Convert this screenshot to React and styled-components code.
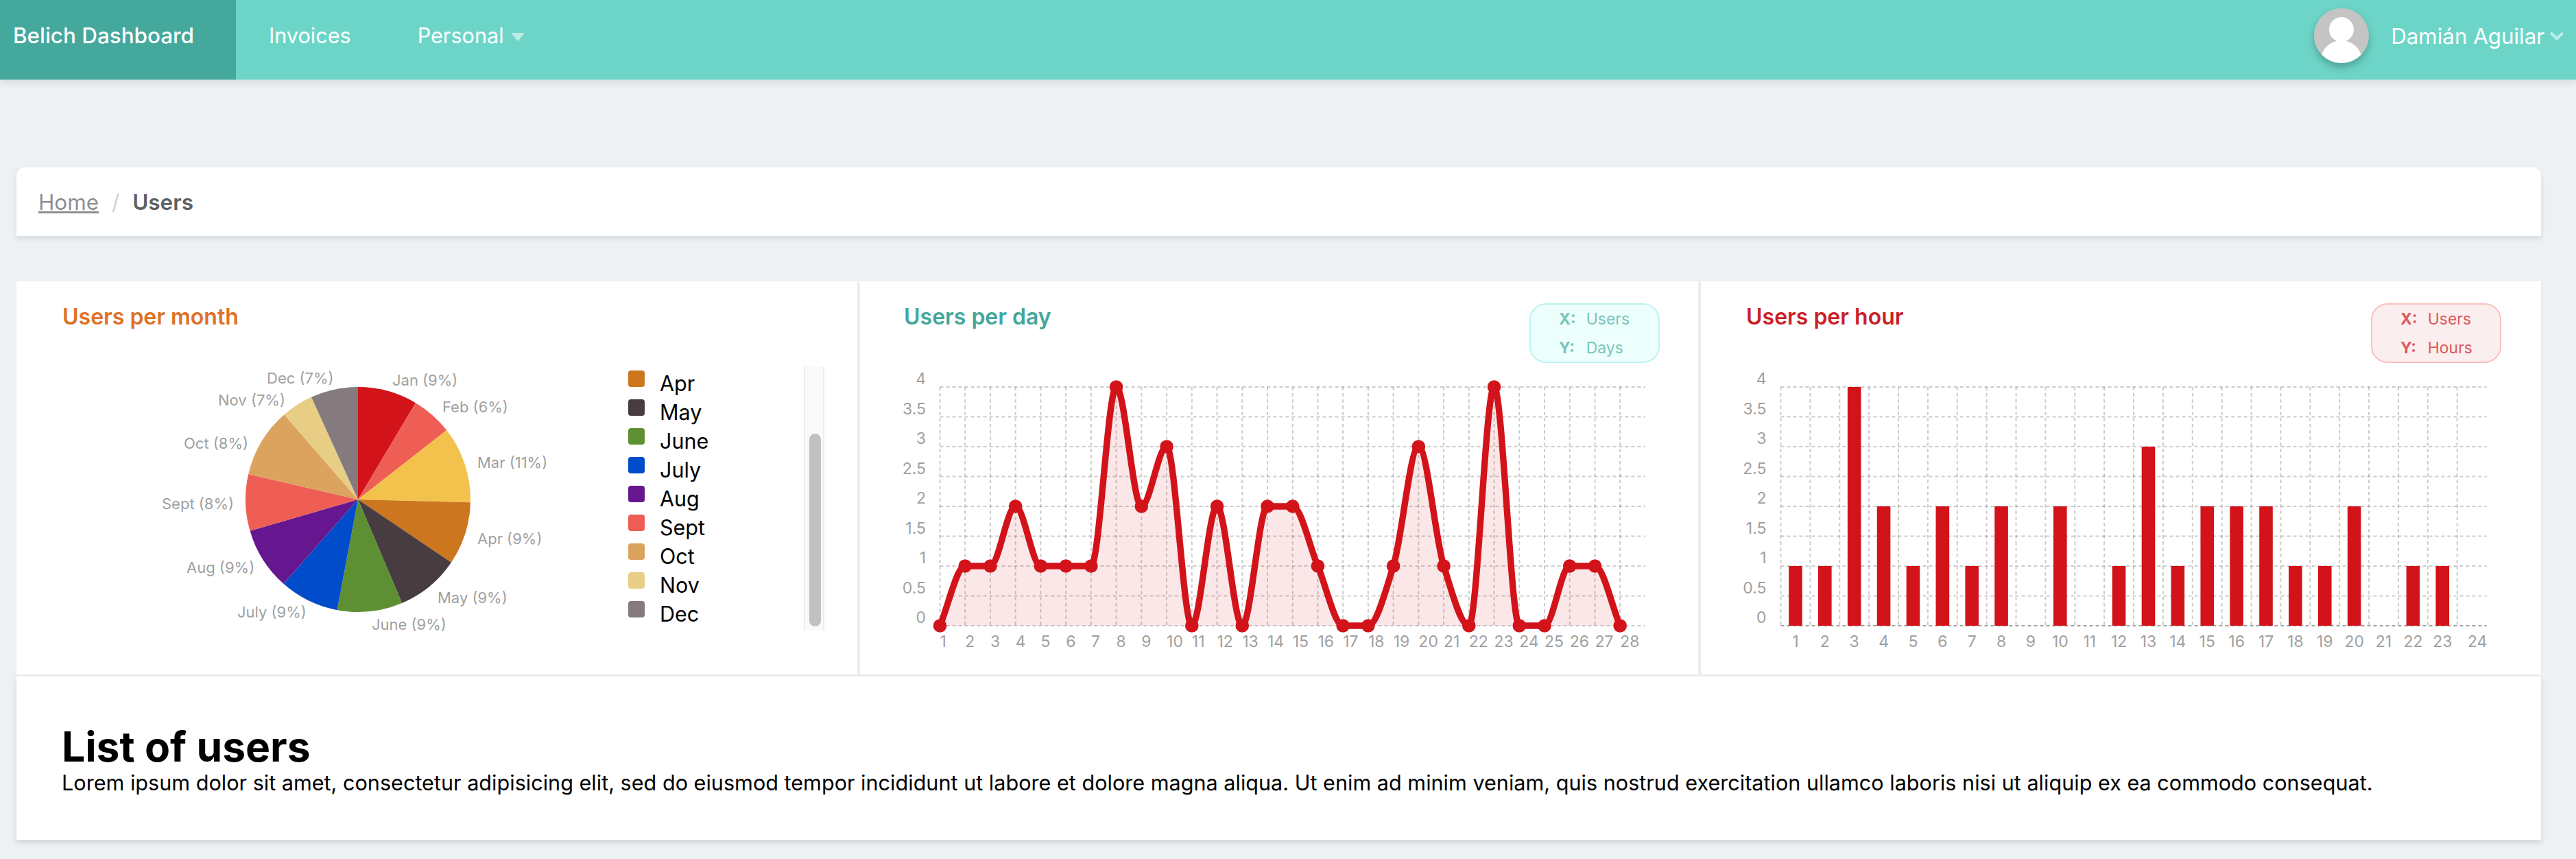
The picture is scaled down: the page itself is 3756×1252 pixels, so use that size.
import React from 'react';
import styled, { createGlobalStyle } from 'styled-components';

const Global = createGlobalStyle`
  html, body { margin: 0; padding: 0; background: #edf1f4; }
  body { font-family: Inter, "Noto Sans", sans-serif; min-height: 1252px; color: #000; }
  * { box-sizing: border-box; }
`;

const Nav = styled.header`
  display: flex;
  height: 116px;
  background: #6dd5c8;
  box-shadow: 0 4px 12px rgba(0, 0, 0, 0.1);
  color: #fff;
  font-size: 30.6px;
  line-height: 36px;
`;
const Brand = styled.div`
  width: 344px;
  padding: 34px 0 0 19px;
  background: #45a89c;
  font-size: 31.4px;
  font-weight: 500;
`;
const NavLink = styled.div`
  display: flex;
  align-items: flex-start;
  padding: 34px 49px 0 48px;
`;
const Caret = styled.span`
  width: 0;
  height: 0;
  margin: 14px 0 0 10px;
  border-left: 10px solid transparent;
  border-right: 10px solid transparent;
  border-top: 12px solid rgba(255, 255, 255, 0.55);
`;
const UserArea = styled.div`
  display: flex;
  align-items: flex-start;
  margin-left: auto;
  padding: 12px 18px 0 0;
`;
const Avatar = styled.svg`
  display: block;
  width: 80px;
  height: 80px;
  border-radius: 50%;
  box-shadow: 0 6px 12px rgba(0, 0, 0, 0.25);
`;
const UserName = styled.span`
  margin: 23px 8px 0 32px;
  font-size: 31.3px;
`;
const Chevron = styled.svg`
  display: block;
  width: 20px;
  height: 14px;
  margin-top: 34px;
`;

const Main = styled.main`
  padding: 128px 51px 0 24px;
`;
const Crumbs = styled.nav`
  display: flex;
  align-items: center;
  height: 100px;
  padding: 2px 32px 0;
  background: #fff;
  border-radius: 12px 12px 0 0;
  box-shadow: 0 4px 8px rgba(0, 0, 0, 0.1);
  font-size: 31.4px;
  line-height: 36px;
`;
const CrumbLink = styled.a`
  color: #8e8e93;
  text-decoration: underline;
`;
const CrumbSep = styled.span`
  color: #d0d0d2;
  margin: 0 19px;
`;
const CrumbHere = styled.span`
  color: #5d6064;
  font-weight: 600;
`;

const Grid = styled.section`
  display: grid;
  grid-template-columns: 1226px 1222.5px 1225.5px;
  column-gap: 3.5px;
  margin-top: 66px;
`;
const Card = styled.div`
  height: 572.5px;
  padding-top: 32px;
  background: #fff;
  box-shadow: 0 1px 4px rgba(0, 0, 0, 0.04);
`;
const CardHead = styled.div`
  display: flex;
  justify-content: space-between;
  align-items: flex-start;
  height: 87px;
  padding: 0 ${(p) => p.$right}px 0 ${(p) => p.$left}px;
`;
const Title = styled.h3`
  margin: 0;
  padding-top: 2px;
  font-size: 32px;
  line-height: 36px;
  font-weight: 600;
  color: ${(p) => p.$color};
`;
const Badge = styled.div`
  display: grid;
  grid-template-columns: auto auto;
  justify-content: start;
  column-gap: 15px;
  align-content: center;
  width: 190px;
  height: 87px;
  padding-left: 41px;
  border: 2.4px solid ${(p) => p.$border};
  border-radius: 24px;
  background: ${(p) => p.$bg};
  color: ${(p) => p.$color};
  font-size: 23px;
  line-height: 42px;
`;
const BadgeKey = styled.b`
  font-weight: 700;
`;
const ChartSvg = styled.svg`
  display: block;
`;
const AxisText = styled.text`
  font-family: Inter, sans-serif;
  font-size: 23px;
  fill: #a0a0a0;
`;
const PieText = styled(AxisText)`
  font-size: 22px;
`;
const GridLine = styled.line`
  stroke: rgba(0, 0, 0, 0.2);
  stroke-width: 2;
  stroke-dasharray: 5 4;
`;
const PieRow = styled.div`
  display: flex;
  align-items: flex-start;
`;
const Legend = styled.div`
  display: flex;
  margin: 5px 0 0 24px;
  height: 385px;
`;
const LegendList = styled.ul`
  width: 256px;
  margin: 0;
  padding: 2px 0 0;
  list-style: none;
`;
const LegendItem = styled.li`
  display: flex;
  align-items: flex-start;
  gap: 22px;
  height: 42px;
  font-size: 30.5px;
  line-height: 46px;
`;
const Swatch = styled.span`
  width: 24px;
  height: 24px;
  margin-top: 4px;
  border-radius: 4px;
  background: ${(p) => p.$color};
`;
const Track = styled.div`
  position: relative;
  width: 30px;
  background: #fafafa;
  border-left: 2px solid #ececec;
  border-right: 2px solid #ececec;
`;
const Thumb = styled.div`
  position: absolute;
  left: 6px;
  top: 98px;
  bottom: 6px;
  width: 17px;
  border-radius: 9px;
  background: #c1c1c1;
`;
const ListCard = styled.section`
  height: 237.5px;
  margin-top: 3.5px;
  padding: 69px 66px 0;
  background: #fff;
  box-shadow: 0 4px 8px rgba(0, 0, 0, 0.12);
`;
const ListTitle = styled.h1`
  margin: 0;
  font-size: 60.5px;
  line-height: 66px;
  font-weight: 700;
`;
const ListText = styled.p`
  margin: 0;
  font-size: 30.6px;
  line-height: 40px;
`;

const RED = '#d3131a';
const ticks = [0, 0.5, 1, 1.5, 2, 2.5, 3, 3.5, 4];
const TOP = 35;
const BOTTOM = 383;
const yOf = (v) => BOTTOM - (v / 4) * (BOTTOM - TOP);

function monotonePath(pts) {
  const n = pts.length;
  const dx = [], m = [], d = [];
  for (let i = 0; i < n - 1; i++) {
    dx[i] = pts[i + 1][0] - pts[i][0];
    m[i] = (pts[i + 1][1] - pts[i][1]) / dx[i];
  }
  d[0] = m[0];
  d[n - 1] = m[n - 2];
  for (let i = 1; i < n - 1; i++) {
    if (m[i] === 0 || m[i - 1] === 0 || m[i - 1] > 0 !== m[i] > 0) d[i] = 0;
    else d[i] = (3 * (dx[i - 1] + dx[i])) / ((2 * dx[i] + dx[i - 1]) / m[i - 1] + (dx[i] + 2 * dx[i - 1]) / m[i]);
  }
  let s = `M${pts[0][0]} ${pts[0][1]}`;
  for (let i = 0; i < n - 1; i++) {
    s += `C${pts[i][0] + dx[i] / 3} ${pts[i][1] + (d[i] * dx[i]) / 3} ${pts[i + 1][0] - dx[i] / 3} ${pts[i + 1][1] - (d[i + 1] * dx[i]) / 3} ${pts[i + 1][0]} ${pts[i + 1][1]}`;
  }
  return s;
}

function Axes({ left, step, count, labelRight, xLabel }) {
  return (
    <>
      {ticks.map((t) => (
        <GridLine key={t} x1={left} x2={left + step * count} y1={yOf(t)} y2={yOf(t)} />
      ))}
      {Array.from({ length: count }, (_, i) => (
        <GridLine key={i} x1={left + step * i} x2={left + step * i} y1={TOP} y2={BOTTOM} />
      ))}
      {ticks.map((t) => (
        <AxisText key={t} x={labelRight} y={yOf(t) - 4} textAnchor="end">{t}</AxisText>
      ))}
      {Array.from({ length: count }, (_, i) => xLabel(i))}
    </>
  );
}

const dayData = [0, 1, 1, 2, 1, 1, 1, 4, 2, 3, 0, 2, 0, 2, 2, 1, 0, 0, 1, 3, 1, 0, 4, 0, 0, 1, 1, 0];
const hourData = [1, 1, 4, 2, 1, 2, 1, 2, 0, 2, 0, 1, 3, 1, 2, 2, 2, 1, 1, 2, 0, 1, 1, 0];

function LineChart() {
  const left = 116.5, step = 36.73;
  const pts = dayData.map((v, i) => [left + step * i, yOf(v)]);
  const line = monotonePath(pts);
  const area = `${line}L${pts[pts.length - 1][0]} ${BOTTOM}L${left} ${BOTTOM}Z`;
  return (
    <ChartSvg width="1222" height="453">
      <Axes left={left} step={step} count={28} labelRight={96}
        xLabel={(i) => <AxisText key={`x${i}`} x={left + step * i} y={414}>{i + 1}</AxisText>} />
      <path d={area} fill={RED} fillOpacity="0.1" />
      <path d={line} fill="none" stroke={RED} strokeWidth="9.4" />
      {pts.map((p, i) => <circle key={i} cx={p[0]} cy={p[1]} r="9.8" fill={RED} />)}
    </ChartSvg>
  );
}

function BarChart() {
  const left = 116.5, step = 42.88;
  return (
    <ChartSvg width="1225" height="453">
      <Axes left={left} step={step} count={24} labelRight={95.5}
        xLabel={(i) => (
          <AxisText key={`x${i}`} x={left + step * (i + 0.5) + (i === 23 ? 8 : 0)} y={414} textAnchor="middle">{i + 1}</AxisText>
        )} />
      <GridLine x1={left} x2={left + step * 24} y1={BOTTOM} y2={BOTTOM} />
      {hourData.map((v, i) => v > 0 && (
        <line key={i} x1={left + step * (i + 0.5)} x2={left + step * (i + 0.5)} y1={BOTTOM} y2={yOf(v)} stroke={RED} strokeWidth="19.6" />
      ))}
    </ChartSvg>
  );
}

const slices = [
  ['#d3131a', 0, 30.8], ['#ee5e55', 30.8, 52], ['#f3c24d', 52, 91.5], ['#cc761f', 91.5, 124],
  ['#473c40', 124, 157], ['#5e9033', 157, 190.7], ['#004ccb', 190.7, 221.5], ['#66178f', 221.5, 253.8],
  ['#ee5e55', 253.8, 283], ['#dca35f', 283, 319], ['#e8cd84', 319, 335.5], ['#857a7e', 335.5, 360],
];
const pieLabels = [
  ['Jan (9%)', 548, 33], ['Feb (6%)', 621, 72], ['Mar (11%)', 672, 153], ['Apr (9%)', 672, 264],
  ['May (9%)', 614, 350], ['June (9%)', 518, 389], ['July (9%)', 322, 371], ['Aug (9%)', 248, 306],
  ['Sept (8%)', 212, 213], ['Oct (8%)', 244, 125], ['Nov (7%)', 294, 62], ['Dec (7%)', 365, 30],
];

function Pie() {
  const cx = 498, cy = 199, r = 164;
  const at = (a) => [cx + r * Math.sin((a * Math.PI) / 180), cy - r * Math.cos((a * Math.PI) / 180)];
  return (
    <ChartSvg width="868" height="453">
      {slices.map(([c, a, b]) => {
        const [x1, y1] = at(a);
        const [x2, y2] = at(b);
        return <path key={a} fill={c} d={`M${cx} ${cy}L${x1} ${y1}A${r} ${r} 0 0 1 ${x2} ${y2}Z`} />;
      })}
      {pieLabels.map(([t, x, y]) => <PieText key={t} x={x} y={y}>{t}</PieText>)}
    </ChartSvg>
  );
}

const legend = [
  ['Apr', '#cc761f'], ['May', '#473c40'], ['June', '#5e9033'], ['July', '#004ccb'], ['Aug', '#66178f'],
  ['Sept', '#ee5e55'], ['Oct', '#dca35f'], ['Nov', '#e8cd84'], ['Dec', '#857a7e'],
];

export default function App() {
  return (
    <>
      <Global />
      <Nav>
        <Brand>Belich Dashboard</Brand>
        <NavLink>Invoices</NavLink>
        <NavLink>Personal<Caret /></NavLink>
        <UserArea>
          <Avatar viewBox="0 0 80 80">
            <rect width="80" height="80" fill="#c4c4c4" />
            <circle cx="40" cy="31" r="18" fill="#fff" />
            <ellipse cx="40" cy="76" rx="30" ry="29" fill="#fff" />
          </Avatar>
          <UserName>Damián Aguilar</UserName>
          <Chevron viewBox="0 0 20 14">
            <path d="M2.5 3l7.5 7.5L17.5 3" fill="none" stroke="rgba(255,255,255,.55)" strokeWidth="4" strokeLinecap="round" strokeLinejoin="round" />
          </Chevron>
        </UserArea>
      </Nav>
      <Main>
        <Crumbs>
          <CrumbLink>Home</CrumbLink>
          <CrumbSep>/</CrumbSep>
          <CrumbHere>Users</CrumbHere>
        </Crumbs>
        <Grid>
          <Card>
            <CardHead $left={67} $right={56}><Title $color="#de7127">Users per month</Title></CardHead>
            <PieRow>
              <Pie />
              <Legend>
                <LegendList>
                  {legend.map(([t, c]) => (
                    <LegendItem key={t}><Swatch $color={c} />{t}</LegendItem>
                  ))}
                </LegendList>
                <Track><Thumb /></Track>
              </Legend>
            </PieRow>
          </Card>
          <Card>
            <CardHead $left={64.5} $right={56}>
              <Title $color="#43a79b">Users per day</Title>
              <Badge $border="#bdf3ee" $bg="#edfffd" $color="#7ac5ba">
                <BadgeKey>X:</BadgeKey><span>Users</span>
                <BadgeKey>Y:</BadgeKey><span>Days</span>
              </Badge>
            </CardHead>
            <LineChart />
          </Card>
          <Card>
            <CardHead $left={66.5} $right={58}>
              <Title $color="#cb1f27">Users per hour</Title>
              <Badge $border="#fbbfbf" $bg="#fbeeee" $color="#db5a5f">
                <BadgeKey>X:</BadgeKey><span>Users</span>
                <BadgeKey>Y:</BadgeKey><span>Hours</span>
              </Badge>
            </CardHead>
            <BarChart />
          </Card>
        </Grid>
        <ListCard>
          <ListTitle>List of users</ListTitle>
          <ListText>Lorem ipsum dolor sit amet, consectetur adipisicing elit, sed do eiusmod tempor incididunt ut labore et dolore magna aliqua. Ut enim ad minim veniam, quis nostrud exercitation ullamco laboris nisi ut aliquip ex ea commodo consequat.</ListText>
        </ListCard>
      </Main>
    </>
  );
}
